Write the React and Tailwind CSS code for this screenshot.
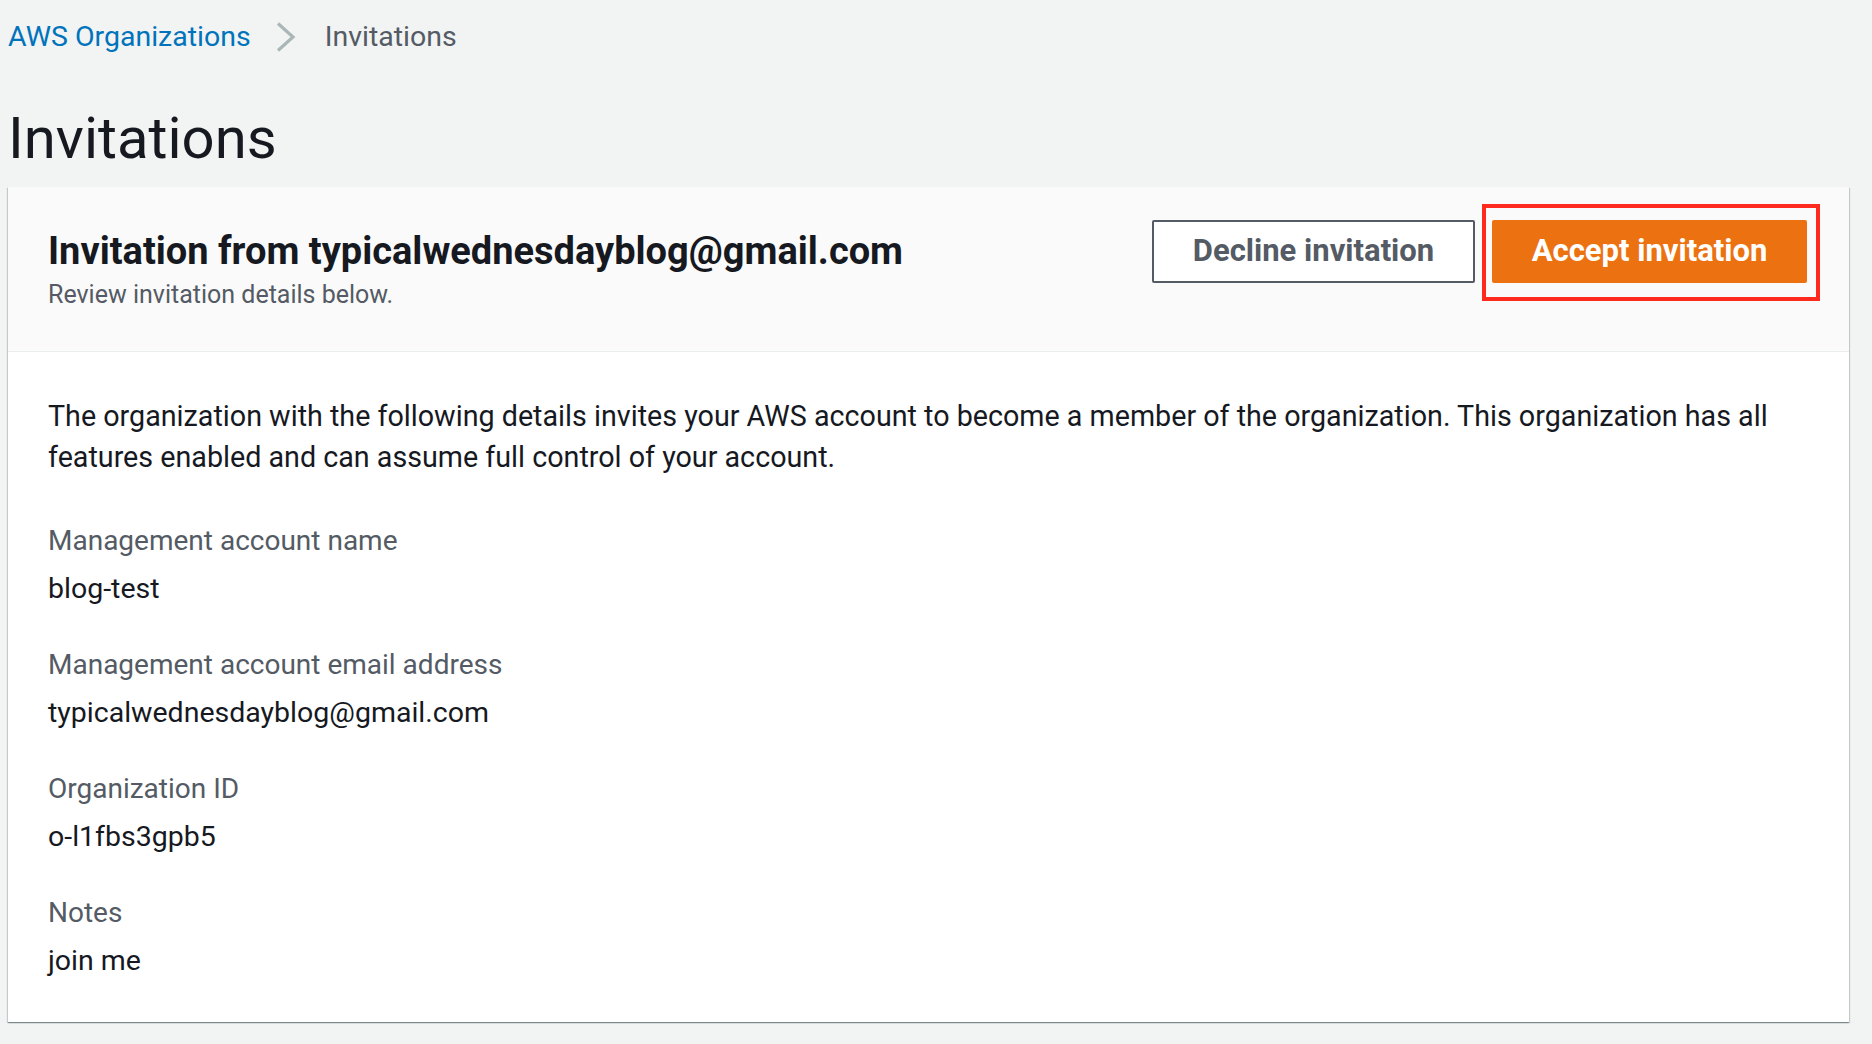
export default function App() {
  const fields = [
    ["Management account name", "blog-test"],
    ["Management account email address", "typicalwednesdayblog@gmail.com"],
    ["Organization ID", "o-l1fbs3gpb5"],
    ["Notes", "join me"],
  ];
  return (
    <div className="min-h-screen bg-[#f2f3f3] pl-[8px] pr-[23px] font-['Roboto',sans-serif] text-[#16191f]">
      <div className="h-[74px] flex items-center text-[28.5px]">
        <span className="text-[#0073bb]">AWS Organizations</span>
        <svg className="ml-[25px] mr-[29px]" width="20" height="30" viewBox="0 0 20 30" fill="none">
          <path d="M2 1.5 L17 15 L2 28.5" stroke="#aab7b8" strokeWidth="3.2" />
        </svg>
        <span className="text-[#545b64]">Invitations</span>
      </div>
      <h1 className="mt-[35px] text-[58px] leading-[58px] font-normal">Invitations</h1>
      <div className="mt-[20px] bg-white shadow-[0_1px_1px_0_rgba(0,28,36,0.3),1px_1px_1px_0_rgba(0,28,36,0.15),-1px_1px_1px_0_rgba(0,28,36,0.15)]">
        <div className="bg-[#fafafa] border-b border-[#eaeded] flex justify-between items-start pl-[40px] pr-[42px] pt-[33px] pb-[40px]">
          <div className="pt-[9px]">
            <div className="text-[38px] leading-[44px] font-bold">Invitation from typicalwednesdayblog@gmail.com</div>
            <div className="mt-[6px] text-[25px] leading-[32px] text-[#545b64]">Review invitation details below.</div>
          </div>
          <div className="flex items-center">
            <button className="w-[323px] h-[63px] border-2 border-[#545b64] rounded-[2px] bg-white text-[#545b64] text-[31px] font-bold">
              Decline invitation
            </button>
            <div className="relative ml-[17px]">
              <button className="w-[315px] h-[63px] rounded-[2px] bg-[#ec7211] text-white text-[31px] font-bold">
                Accept invitation
              </button>
              <div className="absolute left-[-10px] right-[-13px] top-[-16px] bottom-[-18px] border-[4px] border-[#ff2a1e] pointer-events-none"></div>
            </div>
          </div>
        </div>
        <div className="pl-[40px] pr-[40px] pt-[44px] pb-[41px]">
          <p className="text-[28.7px] leading-[41px]">
            The organization with the following details invites your AWS account to become a member of the organization. This organization has all features enabled and can assume full control of your account.
          </p>
          <div className="mt-[43px] flex flex-col gap-[36px]">
            {fields.map(([label, value]) => (
              <div key={label}>
                <div className="text-[28px] leading-[40px] text-[#545b64]">{label}</div>
                <div className="mt-[8px] text-[28.5px] leading-[40px]">{value}</div>
              </div>
            ))}
          </div>
        </div>
      </div>
    </div>
  );
}
